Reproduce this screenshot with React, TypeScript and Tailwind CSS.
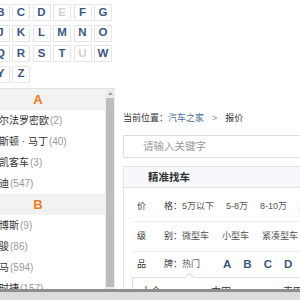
import React from "react";

type Cell = { l: string; d?: boolean };

const grid: Cell[][] = [
  [{ l: "A" }, { l: "B" }, { l: "C" }, { l: "D" }, { l: "E", d: true }, { l: "F" }, { l: "G" }],
  [{ l: "H" }, { l: "J" }, { l: "K" }, { l: "L" }, { l: "M" }, { l: "N" }, { l: "O" }],
  [{ l: "P" }, { l: "Q" }, { l: "R" }, { l: "S" }, { l: "T" }, { l: "U", d: true }, { l: "W" }],
  [{ l: "X" }, { l: "Y" }, { l: "Z" }],
];

const groups: { letter: string; items: [string, number][] }[] = [
  {
    letter: "A",
    items: [
      ["阿尔法罗密欧", 2],
      ["阿斯顿 · 马丁", 40],
      ["安凯客车", 3],
      ["奥迪", 547],
    ],
  },
  {
    letter: "B",
    items: [
      ["巴博斯", 9],
      ["宝骏", 86],
      ["宝马", 594],
      ["保时捷", 157],
      ["北汽", 120],
    ],
  },
];

const font = {
  fontFamily: '"Liberation Sans", "Noto Sans CJK SC", sans-serif',
};

export default function App() {
  return (
    <div
      className="w-[300px] h-[300px] overflow-hidden bg-white flex flex-col text-[#333]"
      style={font}
    >
      <div className="h-[289px] flex overflow-hidden">
        {/* Left column */}
        <div className="w-[115px] shrink-0 flex flex-col">
          <div className="h-[88px] shrink-0 pt-[4px] ml-[-29px] grid grid-cols-[repeat(7,18px)] auto-rows-[17px] gap-x-[2.5px] gap-y-[3.5px] content-start">
            {grid.flat().map((c) => (
              <div
                key={c.l}
                className={`border border-[#e6e6e6] flex items-center justify-center text-[11.5px] font-bold leading-none ${
                  c.d ? "text-[#d0d0d0]" : "text-[#3e5580]"
                }`}
              >
                {c.l}
              </div>
            ))}
          </div>
          <div className="flex-1 min-h-0 flex border-t border-[#e2e2e2]">
            <div className="w-[134px] ml-[-29px] shrink-0 flex flex-col overflow-hidden">
              {groups.map((g) => (
                <div key={g.letter} className="flex flex-col">
                  <div className="h-[21px] shrink-0 bg-[#f2f2f2] flex items-center justify-center text-[13px] font-bold text-[#ef7a23] leading-none">
                    {g.letter}
                  </div>
                  {g.items.map(([name, n]) => (
                    <div
                      key={name}
                      className="h-[21px] shrink-0 flex items-center pl-[18px] whitespace-nowrap leading-none"
                    >
                      <span className="text-[10px] text-[#333]">{name}</span>
                      <span className="text-[10px] text-[#999] ml-[1px]">({n})</span>
                    </div>
                  ))}
                </div>
              ))}
            </div>
            {/* scrollbar */}
            <div className="w-[10px] shrink-0 bg-[#ededed] flex flex-col items-center">
              <div className="h-[9px] flex items-center justify-center">
                <svg width="5" height="3" viewBox="0 0 5 3">
                  <path d="M0 3 L2.5 0 L5 3 Z" fill="#9a9a9a" />
                </svg>
              </div>
              <div className="w-[8px] flex-1 mb-[2px] bg-[#bdbdbd]" />
            </div>
          </div>
        </div>

        {/* Right panel */}
        <div className="flex-1 min-w-0 overflow-hidden pl-[8px] pt-[112px]">
          <div className="h-[12px] flex items-center text-[9px] leading-none whitespace-nowrap">
            <span className="text-[#333]">当前位置：</span>
            <span className="text-[#4a6d9c]">汽车之家</span>
            <span className="text-[#888] mx-[8px]">&gt;</span>
            <span className="text-[#333]">报价</span>
          </div>
          <div className="mt-[11px] w-[260px] h-[23px] border border-[#dedede] flex items-center pl-[19px]">
            <span className="text-[10.5px] text-[#999] leading-none">请输入关键字</span>
          </div>
          <div className="mt-[8px] w-[260px] border border-[#e3e6ea]">
            <div className="h-[21px] bg-[#f6f8fb] border-b border-[#e3e6ea] flex items-center pl-[24px]">
              <span className="text-[10.5px] font-bold text-[#333] leading-none">精准找车</span>
            </div>
            <div className="ml-[8px]">
              <div className="h-[34px] pt-[3px] border-b border-[#eeeeee] flex items-center pl-[5px] text-[9px] leading-none whitespace-nowrap">
                <div className="w-[45px] flex justify-between text-[#333]">
                  <span>价</span>
                  <span>格：</span>
                </div>
                <div className="flex gap-[12px] text-[#555]">
                  <span>5万以下</span>
                  <span>5-8万</span>
                  <span>8-10万</span>
                  <span>10-15万</span>
                </div>
              </div>
              <div className="h-[30px] border-b border-[#eeeeee] flex items-center pl-[5px] text-[9px] leading-none whitespace-nowrap">
                <div className="w-[45px] flex justify-between text-[#333]">
                  <span>级</span>
                  <span>别：</span>
                </div>
                <div className="flex gap-[13px] text-[#555]">
                  <span>微型车</span>
                  <span>小型车</span>
                  <span>紧凑型车</span>
                </div>
              </div>
              <div className="h-[25px] flex items-center pl-[5px] text-[9px] leading-none whitespace-nowrap">
                <div className="w-[45px] flex justify-between text-[#333]">
                  <span>品</span>
                  <span>牌：</span>
                </div>
                <span className="text-[#555] mr-[23px]">热门</span>
                <div className="flex gap-[12px] text-[11.5px] font-bold text-[#3e5580]">
                  <span>A</span>
                  <span>B</span>
                  <span>C</span>
                  <span>D</span>
                  <span>E</span>
                </div>
              </div>
              <div className="relative border-t border-l border-[#e0e0e0] h-[30px] flex items-start pt-[9px] pl-[8px] text-[10px] text-[#333] leading-none whitespace-nowrap">
                <div className="absolute top-[-4px] left-[53px] w-[7px] h-[7px] rotate-45 bg-white border-t border-l border-[#e0e0e0]" />
                <span className="w-[70px]">大众</span>
                <span className="w-[72px]">本田</span>
                <span>丰田</span>
              </div>
            </div>
          </div>
        </div>
      </div>
      {/* bottom bar */}
      <div className="h-[11px] shrink-0 border-t-[3px] border-[#8e8e8e] bg-[#dcdcdc]" />
    </div>
  );
}
